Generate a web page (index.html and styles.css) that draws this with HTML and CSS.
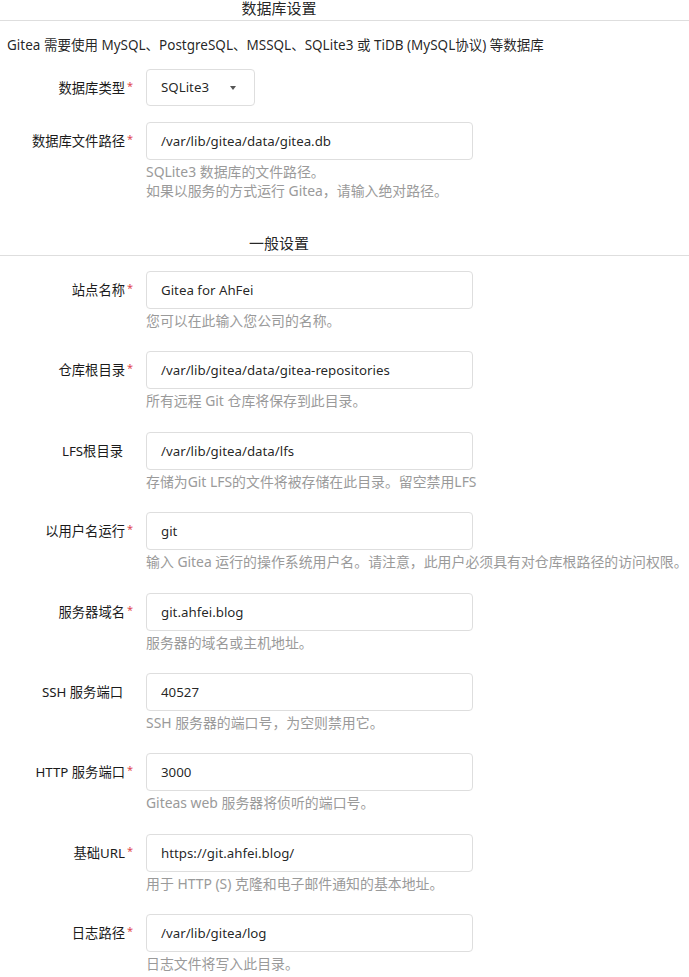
FILE: index.html
```html
<!DOCTYPE html>
<html lang="zh-CN">
<head>
<meta charset="utf-8">
<title>Gitea 安装</title>
<link rel="stylesheet" href="styles.css">
</head>
<body>
<form class="install">
  <h4 class="section-header first">数据库设置</h4>
  <p class="intro">Gitea 需要使用 MySQL、PostgreSQL、MSSQL、SQLite3 或 TiDB (MySQL协议) 等数据库</p>

  <div class="field compact">
    <label class="field-label">数据库类型<span class="req">*</span></label>
    <div class="field-body">
      <div class="select"><span>SQLite3</span><span class="caret"></span></div>
    </div>
  </div>

  <div class="field">
    <label class="field-label">数据库文件路径<span class="req">*</span></label>
    <div class="field-body">
      <div class="input">/var/lib/gitea/data/gitea.db</div>
      <div class="help">SQLite3 数据库的文件路径。<br>如果以服务的方式运行 Gitea，请输入绝对路径。</div>
    </div>
  </div>

  <h4 class="section-header second">一般设置</h4>

  <div class="field row">
    <label class="field-label">站点名称<span class="req">*</span></label>
    <div class="field-body">
      <div class="input">Gitea for AhFei</div>
      <div class="help">您可以在此输入您公司的名称。</div>
    </div>
  </div>

  <div class="field row">
    <label class="field-label">仓库根目录<span class="req">*</span></label>
    <div class="field-body">
      <div class="input">/var/lib/gitea/data/gitea-repositories</div>
      <div class="help">所有远程 Git 仓库将保存到此目录。</div>
    </div>
  </div>

  <div class="field row">
    <label class="field-label">LFS根目录<span class="req blank"></span></label>
    <div class="field-body">
      <div class="input">/var/lib/gitea/data/lfs</div>
      <div class="help">存储为Git LFS的文件将被存储在此目录。留空禁用LFS</div>
    </div>
  </div>

  <div class="field row">
    <label class="field-label">以用户名运行<span class="req">*</span></label>
    <div class="field-body">
      <div class="input">git</div>
      <div class="help">输入 Gitea 运行的操作系统用户名。请注意，此用户必须具有对仓库根路径的访问权限。</div>
    </div>
  </div>

  <div class="field row">
    <label class="field-label">服务器域名<span class="req">*</span></label>
    <div class="field-body">
      <div class="input">git.ahfei.blog</div>
      <div class="help">服务器的域名或主机地址。</div>
    </div>
  </div>

  <div class="field row">
    <label class="field-label">SSH 服务端口<span class="req blank"></span></label>
    <div class="field-body">
      <div class="input">40527</div>
      <div class="help">SSH 服务器的端口号，为空则禁用它。</div>
    </div>
  </div>

  <div class="field row">
    <label class="field-label">HTTP 服务端口<span class="req">*</span></label>
    <div class="field-body">
      <div class="input">3000</div>
      <div class="help">Giteas web 服务器将侦听的端口号。</div>
    </div>
  </div>

  <div class="field row">
    <label class="field-label">基础URL<span class="req">*</span></label>
    <div class="field-body">
      <div class="input">https://git.ahfei.blog/</div>
      <div class="help">用于 HTTP (S) 克隆和电子邮件通知的基本地址。</div>
    </div>
  </div>

  <div class="field row">
    <label class="field-label">日志路径<span class="req">*</span></label>
    <div class="field-body">
      <div class="input">/var/lib/gitea/log</div>
      <div class="help">日志文件将写入此目录。</div>
    </div>
  </div>
</form>
</body>
</html>
```

FILE: styles.css
```css
html, body {
  margin: 0;
  padding: 0;
  background: #ffffff;
}

body {
  font-family: "Noto Sans", "Noto Sans CJK SC", sans-serif;
  font-size: 13.3px;
  color: rgba(0, 0, 0, 0.87);
  overflow: hidden;
}

.install {
  display: flex;
  flex-direction: column;
  width: 689px;
}

.section-header {
  margin: 0;
  font-size: 15px;
  font-weight: 400;
  line-height: 16px;
  padding: 0 131px 4px 0;
  text-align: center;
  border-bottom: 1px solid #dedede;
  color: rgba(0, 0, 0, 0.87);
}

.section-header.first {
  padding-top: 1px;
  line-height: 15px;
}

.section-header.second {
  margin-top: 35px;
  margin-bottom: 15px;
}

.intro {
  margin: 15px 0 14px 7px;
  line-height: 19px;
  font-size: 13.5px;
}

.field {
  display: flex;
  align-items: flex-start;
}

.field.compact {
  margin-bottom: 15px;
}

.field.row {
  margin-bottom: 21.4px;
}

.field-label {
  width: 133px;
  flex: none;
  text-align: right;
  height: 38px;
  line-height: 38px;
  white-space: nowrap;
  color: #1b1b1b;
  margin-right: 13px;
}

.req {
  display: inline-block;
  width: 6px;
  margin-left: 2px;
  color: #e0474f;
  font-size: 11px;
  line-height: 11px;
  vertical-align: 3px;
  text-align: left;
}

.req.blank {
  width: 8px;
}

.field-body {
  display: flex;
  flex-direction: column;
}

.input,
.select {
  box-sizing: border-box;
  height: 38px;
  border: 1px solid #dedede;
  border-radius: 4px;
  padding: 0 14px;
  line-height: 36px;
  background: #fff;
  color: rgba(0, 0, 0, 0.87);
  white-space: nowrap;
}

.input {
  width: 327px;
}

.select {
  width: 109px;
  height: 37px;
  line-height: 35px;
  display: flex;
  align-items: center;
  justify-content: space-between;
}

.caret {
  width: 0;
  height: 0;
  border-left: 3.5px solid transparent;
  border-right: 3.5px solid transparent;
  border-top: 4px solid #555;
  margin-right: 4px;
}

.help {
  margin-top: 2px;
  line-height: 19px;
  font-size: 13.9px;
  color: #9a9a9a;
  white-space: nowrap;
}
```
